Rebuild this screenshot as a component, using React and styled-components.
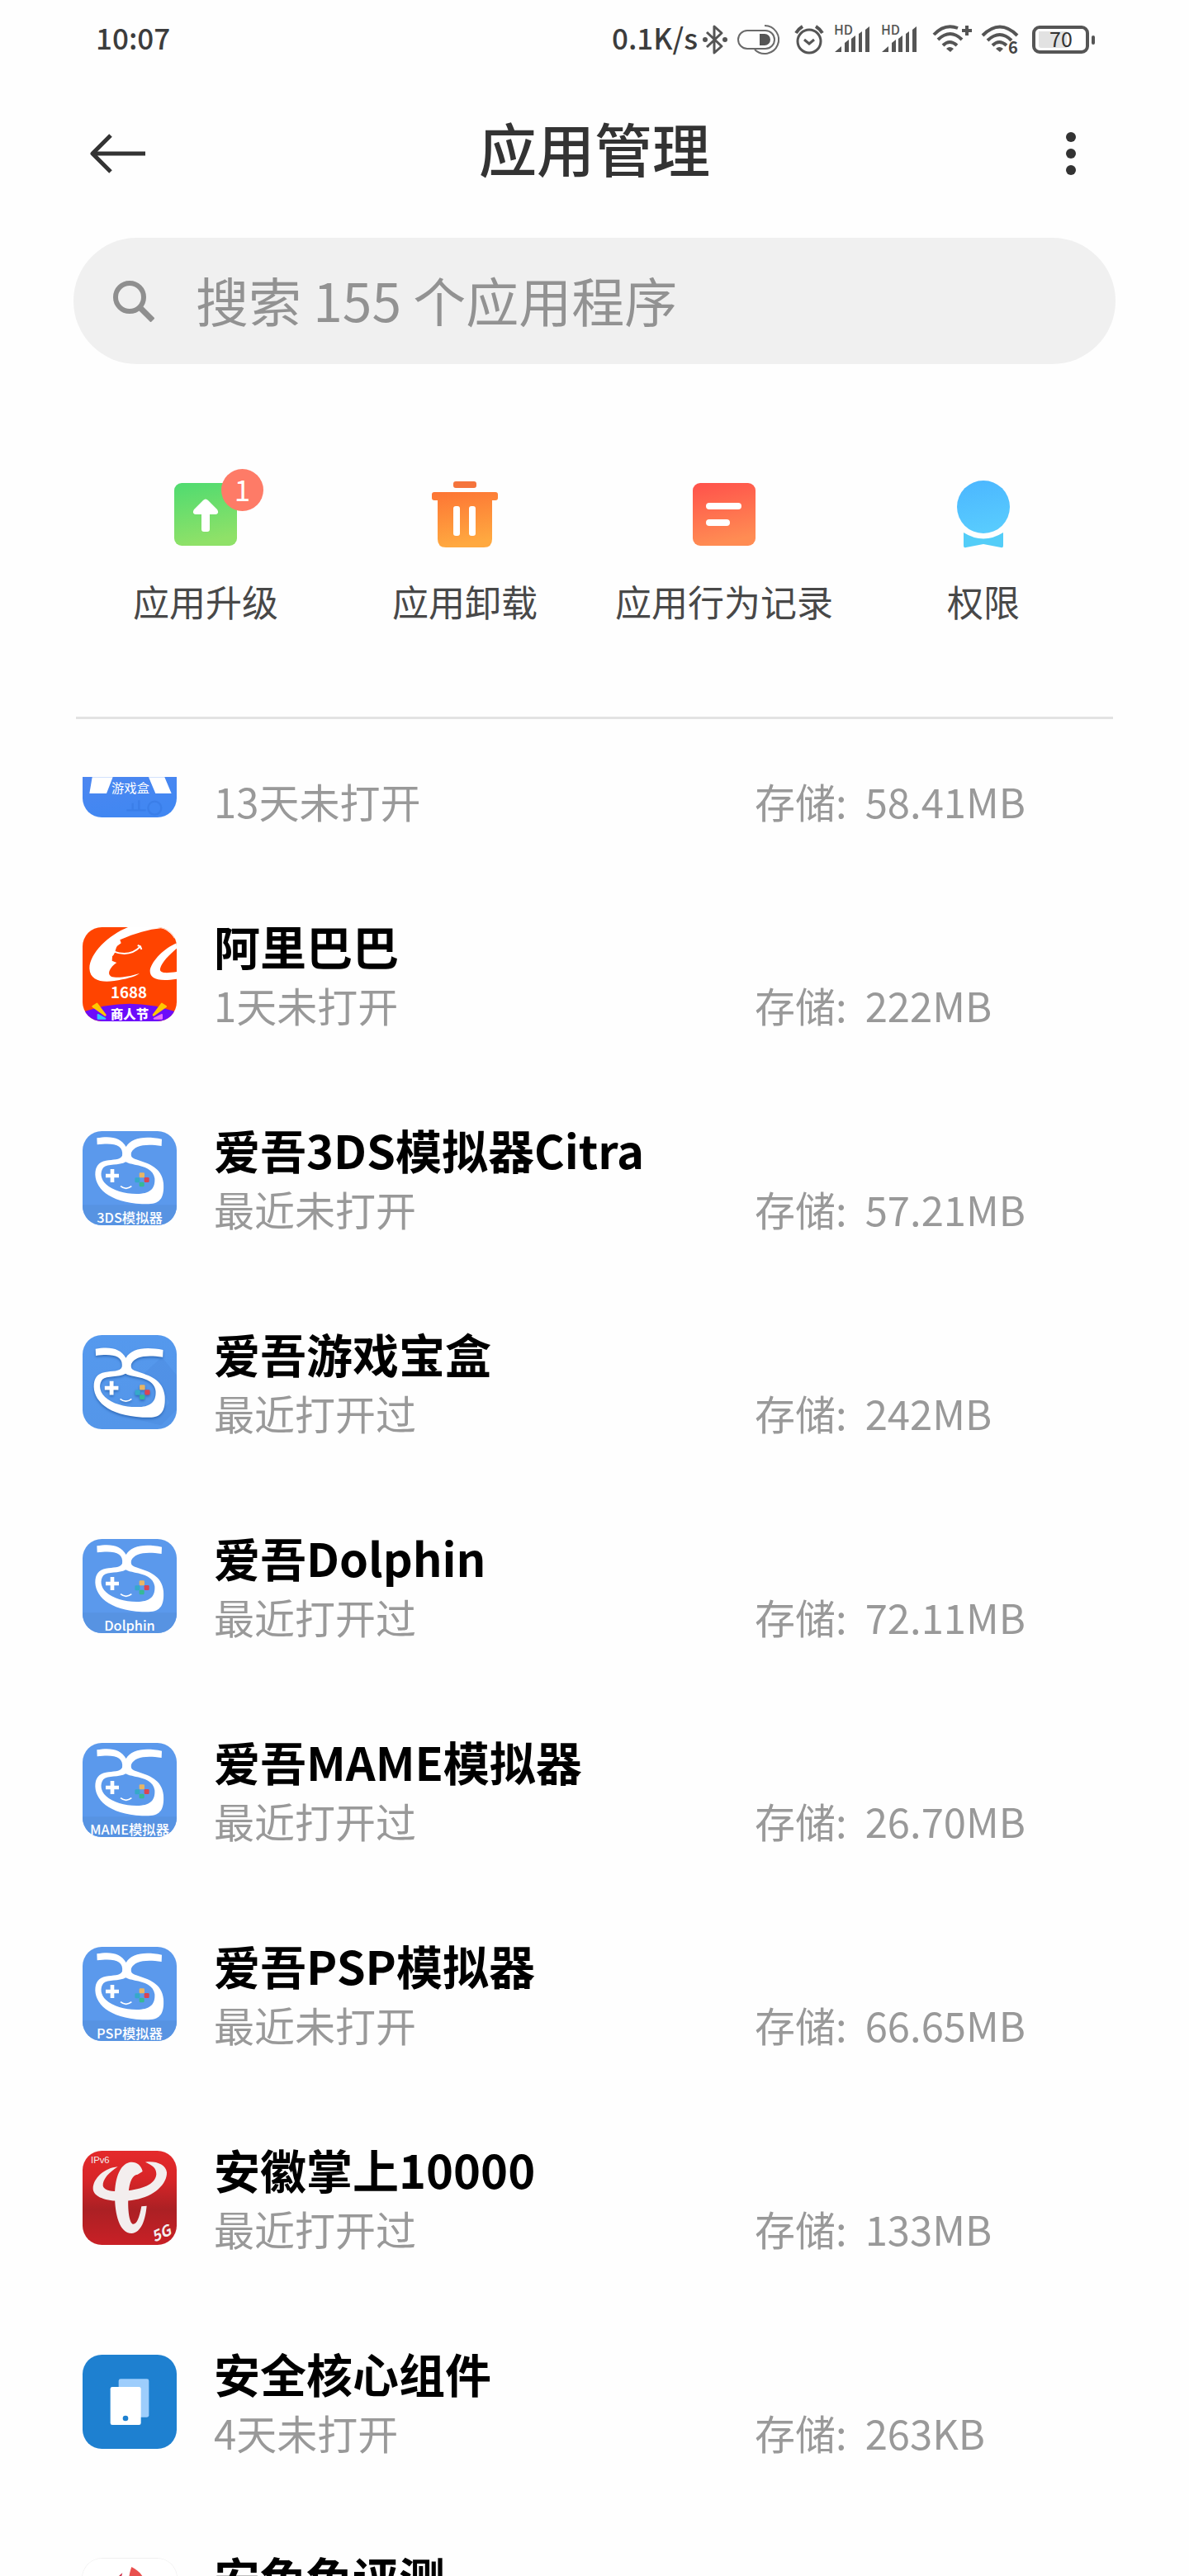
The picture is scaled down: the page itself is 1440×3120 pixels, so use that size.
import React, { useState } from "react";
import styled, { createGlobalStyle } from "styled-components";

const GlobalStyle = createGlobalStyle`
    *, *::before, *::after {
        box-sizing: border-box;
    }

    body {
        margin: 0;
        background: #fff;
        font-family: "Noto Sans CJK SC", "Noto Sans", sans-serif;
    }
`;

const Page = styled.div`
    display: flex;
    flex-direction: column;
    height: 100vh;
    overflow: hidden;
    background: #fefefe;
`;

const StatusBar = styled.div`
    display: flex;
    align-items: center;
    justify-content: space-between;
    flex: none;
    height: 96px;
    padding: 0 114px 0 116px;
`;

const StatusIcons = styled.div`
    display: flex;
    align-items: center;
    gap: 12px;

    svg {
        display: block;
        flex: none;
        overflow: visible;
    }
`;

const StatusText = styled.span`
    padding-bottom: 6px;
    color: #3c3c3c;
    font-size: 35px;
    font-weight: 500;
    line-height: 48px;
`;

const NetSpeed = styled(StatusText)`
    margin-right: -6px;
`;

const Header = styled.header`
    display: grid;
    grid-template-columns: 96px 1fr 96px;
    align-items: center;
    flex: none;
    height: 180px;
    padding: 0 95px;
`;

const IconButton = styled.button`
    display: flex;
    align-items: center;
    justify-content: center;
    width: 96px;
    height: 96px;
    padding: 0;
    border: 0;
    background: none;
    cursor: pointer;
`;

const Title = styled.h1`
    margin: 0;
    padding-bottom: 14px;
    color: #333;
    font-size: 70px;
    font-weight: 500;
    line-height: 96px;
    text-align: center;
`;

const SearchBox = styled.label`
    display: flex;
    align-items: center;
    gap: 50px;
    flex: none;
    height: 153px;
    margin: 12px 89px 0;
    padding: 0 48px;
    border-radius: 77px;
    background: #f0f0f0;

    svg {
        flex: none;
    }
`;

const SearchInput = styled.input`
    flex: 1;
    min-width: 0;
    height: 100%;
    padding: 0 0 6px;
    border: 0;
    outline: 0;
    background: none;
    color: #333;
    font-family: inherit;
    font-size: 64px;

    &::placeholder {
        color: #929292;
        opacity: 1;
    }
`;

const Actions = styled.nav`
    display: grid;
    grid-template-columns: repeat(4, 1fr);
    flex: none;
    margin: 0 92px;
    padding: 134px 0 112px;
    border-bottom: 3px solid #e3e3e3;
`;

const Action = styled.button`
    display: flex;
    flex-direction: column;
    align-items: center;
    gap: 29px;
    padding: 0;
    border: 0;
    background: none;
    color: #484848;
    font-family: inherit;
    font-size: 44px;
    line-height: 56px;
    white-space: nowrap;
    cursor: pointer;
`;

const ActionIcon = styled.span`
    position: relative;
    width: 96px;
    height: 96px;

    svg {
        display: block;
    }
`;

const Badge = styled.span`
    position: absolute;
    top: -7px;
    right: -22px;
    width: 51px;
    height: 51px;
    border-radius: 50%;
    background: #fe7b67;
    color: #fff;
    font-size: 35px;
    line-height: 48px;
    text-align: center;
`;

const AppList = styled.ul`
    flex: 1;
    min-height: 0;
    margin: 70px 0 0;
    padding: 0;
    overflow: hidden;
    list-style: none;
`;

const AppRow = styled.li`
    display: grid;
    grid-template-columns: 114px minmax(0, 1fr) 426px;
    grid-template-rows: 74px 70px;
    align-content: center;
    column-gap: 45px;
    height: 247px;
    /* the list is scrolled part way through its first row */
    margin-top: ${({ $scrolled }) => ($scrolled ? "-132px" : "0")};
    padding: 0 100px;
    white-space: nowrap;
`;

const AppIcon = styled.svg`
    grid-row: 1 / 3;
    align-self: center;
    width: 114px;
    height: 114px;
    border-radius: 24px;
    overflow: visible;
    box-shadow: ${({ $outlined }) => ($outlined ? "0 0 0 1px #f0f0f0" : "none")};
`;

const AppName = styled.h2`
    grid-column: 2 / 4;
    margin: 0;
    color: #000;
    font-size: 56px;
    font-weight: 700;
    line-height: 74px;
`;

const AppMeta = styled.span`
    grid-row: 2;
    grid-column: ${({ $column }) => $column};
    display: flex;
    gap: 22px;
    color: #999;
    font-size: 49px;
    line-height: 70px;
`;

/* status bar icons */

const BluetoothIcon = () => (
    <svg width="30" height="36" viewBox="0 0 30 36" fill="none" stroke="#555" strokeWidth="3">
        <path d="M5 9 23 26 14 34V2l9 8L5 27" strokeLinejoin="round" />
        <circle cx="3" cy="18" r="3" fill="#555" stroke="none" />
        <circle cx="27" cy="18" r="3" fill="#555" stroke="none" />
    </svg>
);

const ToggleIcon = () => (
    <svg width="57" height="36" viewBox="0 0 57 36" fill="none" stroke="#6a6a6a" strokeWidth="2">
        <rect x="1" y="7" width="44" height="22" rx="11" />
        <path d="M33 1a17 17 0 1 1-12 29" />
        <path d="M27 11h6a7 7 0 0 1 0 14h-6z" fill="#555" stroke="none" />
    </svg>
);

const AlarmIcon = () => (
    <svg width="36" height="36" viewBox="0 0 36 36" fill="none" stroke="#555" strokeWidth="3">
        <circle cx="18" cy="20" r="14" />
        <path d="M2 10q3-5 8-8M34 10q-3-5-8-8" strokeWidth="4" />
        <path d="m12 18 6 5 6-5" />
    </svg>
);

const SignalIcon = ({ width }) => (
    <svg width={width} height="36" viewBox={`0 0 ${width} 36`} fill="#555">
        <text x="0" y="12" fontSize="16" fontWeight="500">HD</text>
        <path d="M1 33 9 26v7zM13 22l5-4v15h-5zM21 17l5-4v20h-5zM30 11l4-3v25h-4zM38 6l5-4v31h-5z" />
    </svg>
);

const WifiPlusIcon = () => (
    <svg width="48" height="36" viewBox="0 0 48 36" fill="none" stroke="#555" strokeWidth="4">
        <path d="M2 12Q15-2 31 4M7 18q15-14 29 0M13 25q8-8 17 0" />
        <path d="M17 29q4-4 9 0l-4 4z" fill="#555" stroke="none" />
        <path d="M36 7h12M42 1v12" />
    </svg>
);

const WifiSixIcon = () => (
    <svg width="49" height="36" viewBox="0 0 49 36" fill="none" stroke="#555" strokeWidth="4">
        <path d="M1 13Q22-8 43 13M7 19q15-14 29 0M13 25q8-8 17 0" />
        <path d="M17 29q4-4 9 0l-4 4z" fill="#555" stroke="none" />
        <text x="32" y="35" fontSize="20" fontWeight="700" fill="#444" stroke="none">6</text>
    </svg>
);

const BatteryIcon = () => (
    <svg width="76" height="36" viewBox="0 0 76 36">
        <rect x="2" y="3" width="65" height="30" rx="7" fill="#fff" stroke="#555" strokeWidth="4" />
        <path d="M8 8h34v20H11q-3 0-3-3z" fill="#e2e2e2" />
        <rect x="72" y="13" width="4" height="11" rx="2" fill="#555" />
        <text x="35" y="27" fontSize="25" fontWeight="400" fill="#333" textAnchor="middle">70</text>
    </svg>
);

/* action icons */

const Gradient = ({ id, from, to }) => (
    <defs>
        <linearGradient id={id} x1="0" y1="0" x2="0.2" y2="1">
            <stop offset="0" stopColor={from} />
            <stop offset="1" stopColor={to} />
        </linearGradient>
    </defs>
);

const UpgradeIcon = () => (
    <svg width="96" height="96" viewBox="0 0 96 96">
        <Gradient id="upgrade" from="#4fdb70" to="#8fe168" />
        <rect x="10" y="10" width="76" height="76" rx="9" fill="url(#upgrade)" />
        <path
            d="M45 31q3-3 6 0l11 11q3 5-2 6h-7v18q0 3-3 3h-4q-3 0-3-3V48h-7q-5-1-2-6z"
            fill="#fff"
        />
    </svg>
);

const UninstallIcon = () => (
    <svg width="96" height="96" viewBox="0 0 96 96">
        <Gradient id="uninstall" from="#fd7434" to="#ffa940" />
        <rect x="34" y="8" width="28" height="8" rx="3" fill="#f5743c" />
        <path
            d="M11 21h74q3 0 3 3v4q0 3-3 3h-4v47q0 10-10 10H25q-10 0-10-10V31h-4q-3 0-3-3v-4q0-3 3-3z"
            fill="url(#uninstall)"
        />
        <rect x="34" y="38" width="8" height="36" rx="3" fill="#fff" />
        <rect x="53" y="38" width="8" height="36" rx="3" fill="#fff" />
    </svg>
);

const RecordIcon = () => (
    <svg width="96" height="96" viewBox="0 0 96 96">
        <Gradient id="record" from="#ff514b" to="#ff8c53" />
        <rect x="10" y="10" width="76" height="76" rx="9" fill="url(#record)" />
        <rect x="26" y="34" width="43" height="8" rx="4" fill="#fff" />
        <rect x="26" y="54" width="29" height="8" rx="4" fill="#fff" />
    </svg>
);

const PermissionIcon = () => (
    <svg width="96" height="96" viewBox="0 0 96 96">
        <Gradient id="permission" from="#4bb6ff" to="#58cbfe" />
        <circle cx="48" cy="39" r="32" fill="url(#permission)" />
        <path d="M24 70q24 15 48 0v16q0 3-3 2l-21-4-21 4q-3 1-3-2z" fill="#53cdf8" />
    </svg>
);

/* app icons, drawn on a 342 unit square */

const Tile = ({ id, children }) => (
    <>
        <clipPath id={id}>
            <rect width="342" height="342" rx="70" />
        </clipPath>
        <g clipPath={`url(#${id})`}>{children}</g>
    </>
);

const GameBoxArt = () => (
    <>
        <Gradient id="gamebox" from="#5a86ee" to="#4187f2" />
        <Tile id="gamebox-tile">
            <rect width="342" height="342" fill="url(#gamebox)" />
            <path d="M35 196h75l-23 59H25zM240 196h58l25 59h-58z" fill="#fff" />
            <g fill="none" stroke="#3477df" strokeWidth="7" opacity="0.5">
                <circle cx="262" cy="308" r="24" />
                <path d="M160 316h70M182 290v26M205 280v36" />
            </g>
        </Tile>
        <text x="174" y="253" fontSize="46" fill="#fff" textAnchor="middle">游戏盒</text>
    </>
);

const AlibabaArt = () => (
    <>
        <Tile id="alibaba-tile">
            <rect width="342" height="342" fill="#ff4400" />
            <path
                d="M165 0C95 28 25 95 25 150c2 44 45 52 90 45 40-6 75-14 92-27-45 14-85 18-103 11-18-9-2-36 20-50l-17-7 1-16c14-14 9-25 18-38l14-10-4-12c55-24 105-38 148-42 20 3 40 20 50 38l8-44z"
                fill="#fff"
            />
            <path d="M342 58c-45 18-90 64-97 98-2 32 30 42 97 32v-26c-35 5-64 7-60-12 6-24 35-52 60-73z" fill="#fff" />
            <path d="M112 88q60 22 98-18M200 66l10 4 4 11" fill="none" stroke="#fff" strokeWidth="6" />
            <path d="M0 308q171-60 342 0v34H0z" fill="#6c0cfa" />
            <path d="m38 288 14-9 30 40zM302 288l-14-9-30 40z" fill="#ffc800" stroke="#ffc800" strokeWidth="8" strokeLinejoin="round" />
            <path d="m56 318 26 14H56z" fill="#2fc8ff" stroke="#2fc8ff" strokeWidth="6" strokeLinejoin="round" />
            <path d="m288 318-28 14h28z" fill="#e46cff" stroke="#e46cff" strokeWidth="6" strokeLinejoin="round" />
        </Tile>
        <text x="168" y="257" fontSize="56" fontWeight="700" fill="#fff" textAnchor="middle">1688</text>
        <text x="171" y="333" fontSize="46" fontWeight="900" fill="#fff" textAnchor="middle">商人节</text>
    </>
);

const AiwuLogo = () => (
    <>
        <path
            d="M52 25c50-9 88-2 106 32 20-34 68-40 130-28l-1 25c-60-9-98-2-110 24-3 16 3 20 18 25 45 15 94 30 99 87 3 48-9 74-54 75-130 0-192-50-194-107 0-30 12-46 39-51 25-5 52-1 59-18 6-40-32-48-91-40zM157 112c-24 14-66 6-81 20-14 18-10 43 9 61 26 25 75 37 120 35s59-23 57-56c-4-32-37-44-72-50-15-3-25-5-33-10z"
            fill="#fff"
            fillRule="evenodd"
        />
        <path d="M101 138h14v17h17v14h-17v17h-14v-17H84v-14h17z" fill="#fff" />
        <path d="M138 200q20 16 40 0" fill="none" stroke="#fff" strokeWidth="5" />
        <rect x="206" y="151" width="19" height="18" rx="4" fill="#e8b565" />
        <rect x="224" y="168" width="18" height="18" rx="4" fill="#d94553" />
        <rect x="190" y="169" width="18" height="18" rx="4" fill="#35a9c9" />
        <rect x="206" y="185" width="18" height="17" rx="4" fill="#36b995" />
    </>
);

const AiwuArt = ({ id, label }) => (
    <>
        <Tile id={`${id}-tile`}>
            <rect width="342" height="342" fill="#5b99ec" />
            <rect y="268" width="342" height="74" fill="#5793e2" />
            <AiwuLogo />
        </Tile>
        <text x="171" y="333" fontSize="49" fontWeight="500" fill="#fff" textAnchor="middle">
            {label}
        </text>
    </>
);

const AiwuBoxArt = () => (
    <>
        <Gradient id="aiwubox" from="#5599ee" to="#5496e9" />
        <Tile id="aiwubox-tile">
            <rect width="342" height="342" fill="url(#aiwubox)" />
            <path d="M288 80 215 146l60 30 40 70-50 52-120-40 20 40 120 30 60-60V150z" fill="#3f7fd0" opacity="0.2" />
            <g transform="translate(-7 24) scale(1.04)" filter="drop-shadow(0 5px 5px #2f6ab8)">
                <AiwuLogo />
            </g>
        </Tile>
    </>
);

const TelecomArt = () => (
    <>
        <defs>
            <linearGradient id="telecom" x1="0" y1="0" x2="0" y2="1">
                <stop offset="0" stopColor="#e42a2b" />
                <stop offset="0.3" stopColor="#d82528" />
                <stop offset="0.62" stopColor="#ab2024" />
                <stop offset="1" stopColor="#c92026" />
            </linearGradient>
        </defs>
        <rect width="342" height="342" rx="70" fill="url(#telecom)" />
        <g fill="#f3eeee">
            <path d="M128 58C80 62 38 100 38 138c2 42 90 52 152 40 70-12 118-58 116-100-4-28-38-42-78-37 27 12 40 22 40 44-2 32-38 52-103 60-52 6-87 2-91-18-2-24 24-50 54-69z" />
            <path d="M200 86l18-11c-4-24-26-38-48-33-32 8-52 52-53 118 0 74 18 140 61 140 37-4 50-50 55-100l-19 2c-8 44-18 68-32 64-14-8-19-60-15-112 3-42 14-66 33-68z" />
            <text x="30" y="44" fontSize="34" fontFamily="Liberation Sans, sans-serif">IPv6</text>
            <text x="262" y="332" fontSize="54" fontWeight="700" fontStyle="italic" transform="rotate(-25 262 332)">
                5G
            </text>
        </g>
    </>
);

const CoreArt = () => (
    <>
        <rect width="342" height="342" rx="70" fill="#1e80d0" />
        <rect x="131" y="88" width="110" height="139" rx="7" fill="#9dcdfc" />
        <rect x="101" y="117" width="111" height="138" rx="7" fill="#fff" />
        <circle cx="156" cy="231" r="10" fill="#1e80d0" />
    </>
);

const AntutuArt = () => (
    <>
        <rect width="342" height="342" rx="70" fill="#fff" />
        <path d="M178 30c28 14 46 34 55 72l-58 40c-14-36-8-82 3-112z" fill="#e9504e" />
        <path d="M145 52c-10 30-8 60 4 92l-40-20c-4-30 12-54 36-72z" fill="#c92a44" />
    </>
);

const actions = [
    { label: "应用升级", icon: <UpgradeIcon />, badge: 1 },
    { label: "应用卸载", icon: <UninstallIcon /> },
    { label: "应用行为记录", icon: <RecordIcon /> },
    { label: "权限", icon: <PermissionIcon /> },
];

const apps = [
    { id: "gamebox", name: "", used: "13天未打开", size: "58.41MB", art: <GameBoxArt /> },
    { id: "alibaba", name: "阿里巴巴", used: "1天未打开", size: "222MB", art: <AlibabaArt /> },
    { id: "citra", name: "爱吾3DS模拟器Citra", used: "最近未打开", size: "57.21MB", art: <AiwuArt id="citra" label="3DS模拟器" /> },
    { id: "aiwu", name: "爱吾游戏宝盒", used: "最近打开过", size: "242MB", art: <AiwuBoxArt /> },
    { id: "dolphin", name: "爱吾Dolphin", used: "最近打开过", size: "72.11MB", art: <AiwuArt id="dolphin" label="Dolphin" /> },
    { id: "mame", name: "爱吾MAME模拟器", used: "最近打开过", size: "26.70MB", art: <AiwuArt id="mame" label="MAME模拟器" /> },
    { id: "psp", name: "爱吾PSP模拟器", used: "最近未打开", size: "66.65MB", art: <AiwuArt id="psp" label="PSP模拟器" /> },
    { id: "telecom", name: "安徽掌上10000", used: "最近打开过", size: "133MB", art: <TelecomArt /> },
    { id: "core", name: "安全核心组件", used: "4天未打开", size: "263KB", art: <CoreArt /> },
    { id: "antutu", name: "安兔兔评测", art: <AntutuArt />, outlined: true },
];

const App = () => {
    const [query, setQuery] = useState("");

    return (
        <Page>
            <GlobalStyle />
            <StatusBar>
                <StatusText>10:07</StatusText>
                <StatusIcons>
                    <NetSpeed>0.1K/s</NetSpeed>
                    <BluetoothIcon />
                    <ToggleIcon />
                    <AlarmIcon />
                    <SignalIcon width={45} />
                    <SignalIcon width={50} />
                    <WifiPlusIcon />
                    <WifiSixIcon />
                    <BatteryIcon />
                </StatusIcons>
            </StatusBar>

            <Header>
                <IconButton type="button" aria-label="返回">
                    <svg width="68" height="48" viewBox="0 0 68 48" fill="none" stroke="#333" strokeWidth="5">
                        <path d="M25 2 3 24l22 22M3 24h64" strokeLinejoin="round" />
                    </svg>
                </IconButton>
                <Title>应用管理</Title>
                <IconButton type="button" aria-label="更多">
                    <svg width="12" height="52" viewBox="0 0 12 52" fill="#333">
                        <circle cx="6" cy="6" r="6" />
                        <circle cx="6" cy="26" r="6" />
                        <circle cx="6" cy="46" r="6" />
                    </svg>
                </IconButton>
            </Header>

            <SearchBox>
                <svg width="50" height="50" viewBox="0 0 50 50" fill="none" stroke="#8f8f8f" strokeWidth="6">
                    <circle cx="20" cy="20" r="17" />
                    <path d="m32 32 16 16" strokeWidth="7" />
                </svg>
                <SearchInput
                    type="text"
                    aria-label="搜索应用"
                    placeholder="搜索 155 个应用程序"
                    value={query}
                    onChange={(e) => setQuery(e.target.value)}
                />
            </SearchBox>

            <Actions>
                {actions.map(({ label, icon, badge }) => (
                    <Action key={label} type="button">
                        <ActionIcon>
                            {icon}
                            {badge && <Badge>{badge}</Badge>}
                        </ActionIcon>
                        {label}
                    </Action>
                ))}
            </Actions>

            <AppList>
                {apps.map(({ id, name, used, size, art, outlined }, i) => (
                    <AppRow key={id} $scrolled={i === 0}>
                        <AppIcon viewBox="0 0 342 342" $outlined={outlined}>
                            {art}
                        </AppIcon>
                        {name && <AppName>{name}</AppName>}
                        {used && <AppMeta $column={2}>{used}</AppMeta>}
                        {size && (
                            <AppMeta $column={3}>
                                <span>存储:</span>
                                <span>{size}</span>
                            </AppMeta>
                        )}
                    </AppRow>
                ))}
            </AppList>
        </Page>
    );
};

export default App;
